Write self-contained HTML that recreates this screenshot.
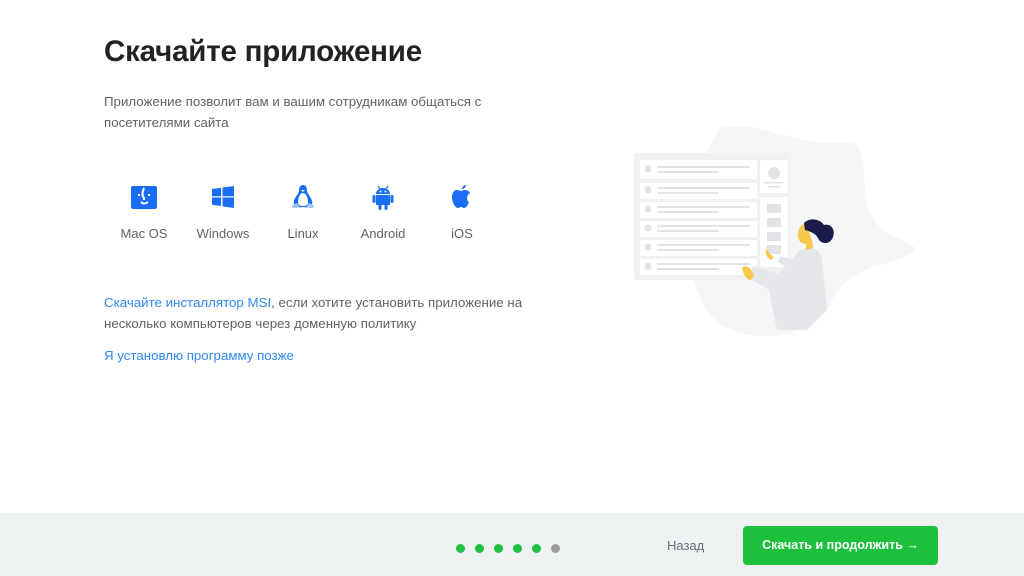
<!DOCTYPE html>
<html><head><meta charset="utf-8"><style>
*{margin:0;padding:0;box-sizing:border-box}
body{width:1024px;height:576px;background:#fff;font-family:"Liberation Sans",sans-serif;position:relative;overflow:hidden;color:#5f6368}
h1{position:absolute;left:104px;top:35px;font-size:29.5px;font-weight:bold;color:#222;letter-spacing:-0.2px}
.p{position:absolute;left:104px;font-size:13.3px;line-height:21px;color:#5f6368}
a{color:#2e86f5;text-decoration:none}
.os{position:absolute;top:182px;width:60px;text-align:center;font-size:13px;color:#5f6368}
.os svg{display:block;margin:0 auto 14px;height:30px}
.foot{position:absolute;left:0;top:513px;width:1024px;height:63px;background:#eff2f3}
.dot{position:absolute;top:544px;width:9px;height:9px;border-radius:50%;background:#1fbf3f}
.btn{position:absolute;left:743px;top:526px;width:195px;height:39px;background:#1cc03d;border-radius:4px;color:#fff;font-size:12.5px;font-weight:bold;text-align:center;line-height:39px}
</style></head><body>
<h1>Скачайте приложение</h1>
<div class="p" style="top:91px">Приложение позволит вам и вашим сотрудникам общаться с<br>посетителями сайта</div>

<div class="os" style="left:114px"><svg viewBox="0 0 30 30" width="30"><rect x="2" y="4" width="26" height="23" rx="2" fill="#1a6ef5"/><path d="M15 6 q-3 7 0 10 v2 M12 20 q3 3 7 0 M10 12v2 M20 12v2" stroke="#fff" stroke-width="2" fill="none"/></svg>Mac OS</div>
<div class="os" style="left:193px"><svg viewBox="0 0 30 30" width="30"><path d="M4 7l9-1.3v8.5H4zM14.5 5.5L26 4v10.2H14.5zM4 15.5h9v8.5L4 22.7zM14.5 15.5H26V26l-11.5-1.6z" fill="#1a6ef5"/></svg>Windows</div>
<div class="os" style="left:273px"><svg viewBox="0 0 30 30" width="30"><path d="M15 3c-3 0-4 3-4 6 0 2-4 6-5 10-1 3 1 5 3 6 2 1 4 0 6 0s4 1 6 0c2-1 4-3 3-6-1-4-5-8-5-10 0-3-1-6-4-6z" fill="#1a6ef5"/><path d="M15 11c-3 0-5 5-5 9 0 3 2 4 5 4s5-1 5-4c0-4-2-9-5-9z" fill="#fff"/><path d="M5 23c-2 1-1 3 2 3l5-1-3-4zM25 23c2 1 1 3-2 3l-5-1 3-4z" fill="#9ec1fa"/><path d="M13 8h4l-2 2z" fill="#fff"/></svg>Linux</div>
<div class="os" style="left:353px"><svg viewBox="0 0 30 30" width="30"><path d="M8 12a7 6 0 0 1 14 0z M8 13h14v10H8z" fill="#1a6ef5"/><rect x="4.5" y="13" width="3" height="8" rx="1.5" fill="#1a6ef5"/><rect x="22.5" y="13" width="3" height="8" rx="1.5" fill="#1a6ef5"/><rect x="10.5" y="22" width="3" height="6" rx="1.5" fill="#1a6ef5"/><rect x="16.5" y="22" width="3" height="6" rx="1.5" fill="#1a6ef5"/><path d="M10 4l2 3M20 4l-2 3" stroke="#1a6ef5" stroke-width="1.2"/><circle cx="12.5" cy="9.5" r="1" fill="#fff"/><circle cx="17.5" cy="9.5" r="1" fill="#fff"/></svg>Android</div>
<div class="os" style="left:432px"><svg viewBox="0 0 30 30" width="30"><path d="M20 16c0-3 2-4 3-5-1-2-3-3-5-3s-3 1-4 1-2-1-4-1c-3 0-5 3-5 7 0 5 3 11 6 11 1 0 2-1 3-1s2 1 3 1c2 0 4-3 5-6-1 0-2-2-2-4z M15 7c0-2 2-4 4-4 0 2-2 4-4 4z" fill="#1a6ef5"/></svg>iOS</div>

<div class="p" style="top:292px"><a>Скачайте инсталлятор MSI</a>, если хотите установить приложение на<br>несколько компьютеров через доменную политику</div>
<div class="p" style="top:345px"><a>Я установлю программу позже</a></div>

<svg style="position:absolute;left:620px;top:120px" width="300" height="220" viewBox="0 0 300 220">
<path d="M100 8c40-10 70 20 130 14 20 0 10 50 20 70 10 30 60 30 40 42-30 15-60 10-80 50-20 36-80 40-110 20-20-15-25-40-30-60L15 150V35h70z" fill="#f5f6f8"/>
<rect x="14" y="33" width="155" height="127" rx="3" fill="#f0f1f3"/>
<g fill="#fff">
<rect x="20" y="40" width="117" height="19" rx="2"/><rect x="20" y="63" width="117" height="16" rx="2"/><rect x="20" y="82" width="117" height="16" rx="2"/><rect x="20" y="101" width="117" height="16" rx="2"/><rect x="20" y="120" width="117" height="16" rx="2"/><rect x="20" y="139" width="117" height="16" rx="2"/>
<rect x="140" y="40" width="28" height="33" rx="2"/><rect x="140" y="77" width="28" height="70" rx="2"/></g>
<g fill="#e1e3e7"><circle cx="28" cy="49" r="3.5"/><circle cx="28" cy="70" r="3.5"/><circle cx="28" cy="89" r="3.5"/><circle cx="28" cy="108" r="3.5"/><circle cx="28" cy="127" r="3.5"/><circle cx="28" cy="146" r="3.5"/>
<rect x="37" y="46" width="93" height="2"/><rect x="37" y="51" width="62" height="2"/><rect x="37" y="67" width="93" height="2"/><rect x="37" y="72" width="62" height="2"/><rect x="37" y="86" width="93" height="2"/><rect x="37" y="91" width="62" height="2"/><rect x="37" y="105" width="93" height="2"/><rect x="37" y="110" width="62" height="2"/><rect x="37" y="124" width="93" height="2"/><rect x="37" y="129" width="62" height="2"/><rect x="37" y="143" width="93" height="2"/><rect x="37" y="148" width="62" height="2"/>
<circle cx="154" cy="53" r="6"/><rect x="144" y="62" width="20" height="1.5"/><rect x="148" y="66" width="12" height="1.5"/>
<rect x="147" y="84" width="14" height="9"/><rect x="147" y="98" width="14" height="9"/><rect x="147" y="112" width="14" height="9"/><rect x="147" y="125" width="14" height="9"/></g>
<path d="M180 130c10-5 20-2 22 10l5 50-20 20h-30l-8-40-20-12 4-12 25 8z" fill="#e4e6ea"/>
<path d="M158 142l18 10 4-10-20-6z" fill="#e4e6ea"/>
<path d="M186 104c-6 0-8 6-8 12 0 5 4 8 8 8v6l7-2-1-8z" fill="#f7c948"/>
<path d="M184 103c6-6 16-4 20 2 6-2 12 4 9 12-3 8-11 7-14 3-2-5-6-8-14-10z" fill="#1c1c4a"/>
<path d="M122 148c3-3 6-2 9 2l3 5-3 5c-4 0-8-6-9-12zM146 128l3 5 5 4-3 3c-4-2-6-6-5-12z" fill="#f7c948"/>
</svg>

<div class="foot"></div>
<div class="dot" style="left:456px"></div><div class="dot" style="left:475px"></div><div class="dot" style="left:494px"></div><div class="dot" style="left:513px"></div><div class="dot" style="left:532px"></div><div class="dot" style="left:551px;background:#9a9ca2"></div>
<div style="position:absolute;left:667px;top:538px;font-size:13px;color:#6b6f75">Назад</div>
<div class="btn">Скачать и продолжить →</div>
</body></html>
